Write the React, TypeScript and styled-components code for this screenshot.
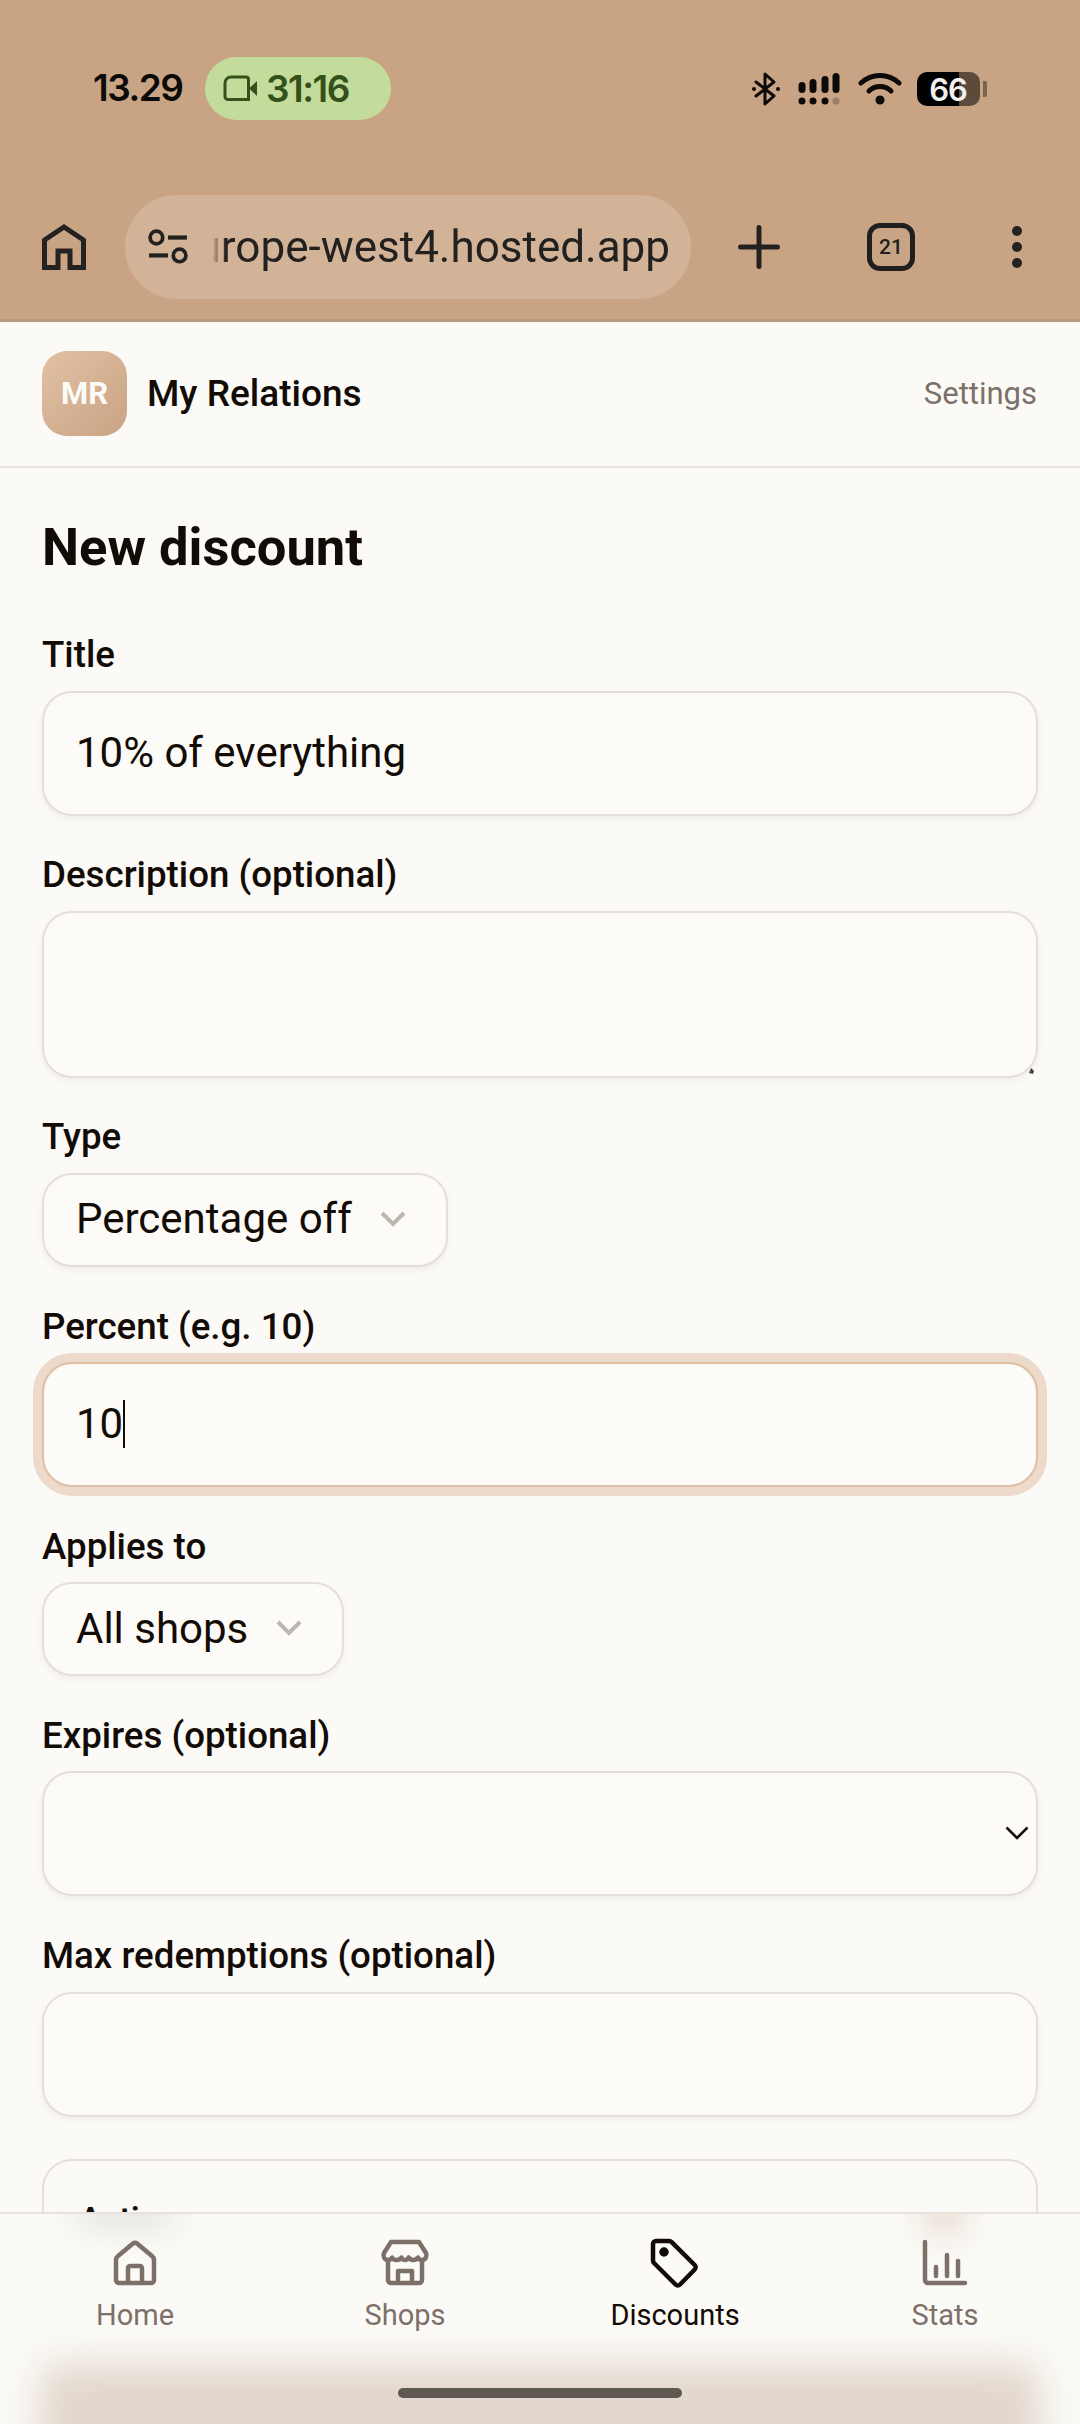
import { createGlobalStyle, styled } from "styled-components"

const GlobalStyle = createGlobalStyle`
	* {
		box-sizing: border-box;
	}

	html,
	body {
		margin: 0;
		background: #fbfaf6;
	}

	body {
		font-family: Roboto, "Liberation Sans", sans-serif;
		color: #120b06;
	}
`

const Screen = styled.div`
	position: relative;
	width: 1080px;
	height: 2424px;
	overflow: hidden;
	display: flex;
	flex-direction: column;
	background: #fbfaf6;
`

const Chrome = styled.div`
	height: 322px;
	flex: none;
	background: #c8a484;
	border-bottom: 3px solid #b99a7e;
`

const StatusBar = styled.div`
	height: 195px;
	padding: 57px 0 0 93px;
	display: flex;
	align-items: flex-start;
`

const Clock = styled.span`
	width: 112px;
	height: 63px;
	line-height: 62px;
	font-family: Inter, Roboto, sans-serif;
	font-size: 37px;
	font-weight: 600;
	letter-spacing: -1.5px;
	color: #0c0a08;
`

const CallPill = styled.div`
	width: 186px;
	height: 63px;
	border-radius: 32px;
	background: #c3dc9b;
	padding-left: 18px;
	display: flex;
	align-items: center;
	gap: 9px;
	font-family: Inter, Roboto, sans-serif;
	font-size: 37px;
	font-weight: 600;
	letter-spacing: -1.5px;
	color: #35501a;
`

const StatusIcons = styled.div`
	margin-left: 361px;
	height: 63px;
	display: flex;
	align-items: center;
`

const SignalIcon = styled.svg`
	margin-left: 17px;
`

const WifiIcon = styled.svg`
	margin-left: 17px;
`

const BatteryBody = styled.div`
	width: 63px;
	height: 34px;
	margin-left: 15px;
	border-radius: 10px;
	background: linear-gradient(90deg, #000 42px, #5c4a3c 42px);
	text-align: center;
	padding-right: 1px;
	line-height: 35px;
	font-family: Inter, Roboto, sans-serif;
	font-size: 31px;
	font-weight: 600;
	letter-spacing: -1px;
	color: #f2f0ee;
`

const BatteryTip = styled.div`
	width: 4px;
	height: 16px;
	margin-left: 3px;
	border-radius: 0 2px 2px 0;
	background: #7b6450;
`

const Toolbar = styled.div`
	height: 104px;
	padding-left: 42px;
	display: grid;
	grid-template-columns: 83px 566px 136px 128px 124px;
	align-items: center;
	justify-items: center;

	& > svg:first-child {
		justify-self: start;
	}
`

const UrlBar = styled.div`
	width: 566px;
	height: 104px;
	border-radius: 52px;
	background: #d3b398;
	padding: 0 21px 0 23px;
	display: flex;
	align-items: center;
	gap: 24px;
`

const UrlClip = styled.div`
	flex: 1;
	min-width: 0;
	overflow: hidden;
	display: flex;
	justify-content: flex-end;
	white-space: nowrap;
	font-size: 44px;
	color: #23211f;
	mask-image: linear-gradient(90deg, transparent 0, #000 14px);
`

const TabCount = styled.div`
	width: 48px;
	height: 48px;
	border: 5px solid #1f1f1f;
	border-radius: 13px;
	display: flex;
	align-items: center;
	justify-content: center;
	font-size: 21px;
	font-weight: 500;
	color: #1f1f1f;
`

const Header = styled.header`
	height: 146px;
	flex: none;
	padding: 0 43px 2px 42px;
	border-bottom: 2px solid #e8e2dc;
	display: flex;
	align-items: center;
	gap: 20px;
`

const Avatar = styled.div`
	width: 85px;
	height: 85px;
	border-radius: 25px;
	background: linear-gradient(135deg, #e2c0a4, #c8a484);
	display: flex;
	align-items: center;
	justify-content: center;
	font-size: 31px;
	font-weight: 700;
	color: #fdfbf8;
`

const Brand = styled.span`
	flex: 1;
	font-size: 37px;
	font-weight: 500;
`

const SettingsLink = styled.span`
	font-size: 31px;
	color: #7d7068;
`

const Main = styled.main`
	padding: 46px 42px 0;
	display: flex;
	flex-direction: column;
`

const Heading = styled.h1`
	margin: 0 0 52px;
	font-size: 52.5px;
	line-height: 66px;
	font-weight: 700;
`

const Field = styled.div`
	display: flex;
	flex-direction: column;
	align-items: flex-start;
	margin-bottom: 36.7px;
`

const Label = styled.div`
	height: 46px;
	margin-bottom: 12.5px;
	line-height: 46px;
	font-size: 36.7px;
	font-weight: 500;
`

const Control = styled.div<{ $height: number; $focused?: boolean }>`
	position: relative;
	width: 100%;
	height: ${(p) => p.$height}px;
	padding: 0 32px 2px;
	border: 2px solid ${(p) => (p.$focused ? "#dfbfa3" : "#e6dfd9")};
	border-radius: 30px;
	background: #fcfbf8;
	box-shadow: ${(p) =>
		p.$focused ? "0 0 0 9px #eddacb" : "0 3px 6px rgba(70, 45, 25, 0.06)"};
	display: flex;
	align-items: center;
	font-size: 42px;
`

const SelectBox = styled.div`
	height: 94px;
	padding: 0 40px 2px 32px;
	border: 2px solid #e6dfd9;
	border-radius: 30px;
	background: #fcfbf8;
	box-shadow: 0 3px 6px rgba(70, 45, 25, 0.06);
	display: inline-flex;
	align-items: center;
	gap: 28px;
	font-size: 42px;
`

const Caret = styled.span`
	width: 2px;
	height: 48px;
	background: #120b06;
`

const ResizeGrip = styled.svg`
	position: absolute;
	right: 0;
	bottom: 1px;
`

const DateChevron = styled.svg`
	position: absolute;
	right: 7px;
	top: 53px;
`

const SwitchCard = styled.div`
	height: 170px;
	flex: none;
	margin-top: 6px;
	padding: 35px 35px 0;
	border: 2px solid #e6dfd9;
	border-radius: 30px;
	font-size: 34px;
	font-weight: 600;
	line-height: 46px;
`

const BottomNav = styled.nav`
	position: absolute;
	left: 0;
	right: 0;
	bottom: 0;
	height: 212px;
	padding-top: 24px;
	overflow: hidden;
	border-top: 2px solid #e8e2dc;
	background: #fbfaf6;
	display: grid;
	grid-template-columns: repeat(4, 1fr);
	align-items: start;
`

// what the page behind the frosted nav leaves showing through it
const FrostGlow = styled.div<{
	$left: number
	$top: number
	$width: number
	$height: number
	$color: string
	$blur: number
}>`
	position: absolute;
	left: ${(p) => p.$left}px;
	top: ${(p) => p.$top}px;
	width: ${(p) => p.$width}px;
	height: ${(p) => p.$height}px;
	border-radius: 20px;
	background: ${(p) => p.$color};
	filter: blur(${(p) => p.$blur}px);
`

const NavItem = styled.div<{ $active?: boolean }>`
	position: relative;
	display: flex;
	flex-direction: column;
	align-items: center;
	gap: 7px;
	font-size: 29px;
	line-height: 36px;
	color: ${(p) => (p.$active ? "#120b06" : "#7d7068")};

	& svg {
		display: block;
	}
`

const HomeBar = styled.div`
	position: absolute;
	left: 398px;
	bottom: 26px;
	width: 284px;
	height: 10px;
	border-radius: 5px;
	background: #5d5951;
`

function NavIcon({ children }: { children: React.ReactNode }) {
	return (
		<svg
			width="52"
			height="52"
			viewBox="0 0 52 52"
			fill="none"
			stroke="currentColor"
			strokeWidth="4.5"
			strokeLinecap="round"
			strokeLinejoin="round"
		>
			{children}
		</svg>
	)
}

function SelectChevron() {
	return (
		<svg width="26" height="16" viewBox="0 0 26 16" fill="none">
			<path d="M2 2 13 13 24 2" stroke="#bdb5ae" strokeWidth="4" />
		</svg>
	)
}

export default function App() {
	return (
		<Screen>
			<GlobalStyle />
			<Chrome>
				<StatusBar>
					<Clock>13.29</Clock>
					<CallPill>
						<svg width="34" height="27" viewBox="0 0 34 27" fill="none">
							<path
								d="M8 2h15a2.500 2.500 0 0 1 2.500 2.500v20H5a3 3 0 0 1-3-3V8a6 6 0 0 1 6-6Z"
								stroke="#35501a"
								strokeWidth="3"
							/>
							<path d="M26 13.500 34 6v15Z" fill="#35501a" />
						</svg>
						31:16
					</CallPill>
					<StatusIcons>
						<svg width="28" height="34" viewBox="0 0 28 34" fill="none">
							<path
								d="M4 10 22 24 13 32V2l9 8L4 24"
								stroke="#0c0a08"
								strokeWidth="3"
								strokeLinejoin="round"
								strokeLinecap="round"
							/>
							<circle cx="2" cy="17" r="2" fill="#0c0a08" />
							<circle cx="26" cy="17" r="2" fill="#0c0a08" />
						</svg>
						<SignalIcon width="44" height="34" viewBox="0 0 41 34">
							<g fill="#0c0a08">
								<rect x="0" y="10" width="7" height="11" rx="3.5" />
								<rect x="11" y="7" width="7" height="14" rx="3.5" />
								<rect x="23" y="4" width="7" height="17" rx="3.5" />
								<rect x="34" y="1" width="7" height="20" rx="3.5" />
								<circle cx="3.5" cy="29" r="3.5" />
								<circle cx="14.5" cy="29" r="3.5" />
								<circle cx="26.5" cy="29" r="3.5" />
							</g>
							<circle cx="37.5" cy="29" r="3.5" fill="#9a7f68" />
						</SignalIcon>
						<WifiIcon width="44" height="34" viewBox="0 0 44 34" fill="none">
							<path
								d="M3 11C14 1 30 1 41 11"
								stroke="#0c0a08"
								strokeWidth="5"
								strokeLinecap="round"
							/>
							<path
								d="M11 19C17 13 27 13 33 19"
								stroke="#0c0a08"
								strokeWidth="5"
								strokeLinecap="round"
							/>
							<circle cx="22" cy="28" r="4.5" fill="#0c0a08" />
						</WifiIcon>
						<BatteryBody>66</BatteryBody>
						<BatteryTip />
					</StatusIcons>
				</StatusBar>
				<Toolbar>
					<svg width="44" height="46" viewBox="0 0 44 46" fill="none">
						<path
							d="M2.500 43.500V16L22 3l19.500 13v27.500H28V27H16v16.500Z"
							stroke="#242220"
							strokeWidth="5"
						/>
					</svg>
					<UrlBar>
						<svg width="40" height="36" viewBox="0 0 38 34" fill="none">
							<circle cx="8" cy="8" r="6" stroke="#23211f" strokeWidth="3.500" />
							<path d="M19 8h18" stroke="#23211f" strokeWidth="4" />
							<circle cx="30" cy="25" r="6" stroke="#23211f" strokeWidth="3.500" />
							<path d="M1 25h18" stroke="#23211f" strokeWidth="4" />
						</svg>
						<UrlClip>
							<span>europe-west4.hosted.app</span>
						</UrlClip>
					</UrlBar>
					<svg width="42" height="44" viewBox="0 0 42 44" fill="none">
						<path
							d="M21 2.500v39M2.500 22h37"
							stroke="#242220"
							strokeWidth="5"
							strokeLinecap="round"
						/>
					</svg>
					<TabCount>21</TabCount>
					<svg width="14" height="44" viewBox="0 0 14 44">
						<g fill="#242220">
							<circle cx="7" cy="6" r="5" />
							<circle cx="7" cy="22" r="5" />
							<circle cx="7" cy="38" r="5" />
						</g>
					</svg>
				</Toolbar>
			</Chrome>

			<Header>
				<Avatar>MR</Avatar>
				<Brand>My Relations</Brand>
				<SettingsLink>Settings</SettingsLink>
			</Header>

			<Main>
				<Heading>New discount</Heading>

				<Field>
					<Label>Title</Label>
					<Control $height={125}>10% of everything</Control>
				</Field>

				<Field>
					<Label>Description (optional)</Label>
					<Control $height={167}>
						<ResizeGrip width="10" height="10" viewBox="0 0 10 10">
							<path d="M3 8 5 3 8 6 7 9Z" fill="#4a4540" />
						</ResizeGrip>
					</Control>
				</Field>

				<Field>
					<Label>Type</Label>
					<SelectBox>
						Percentage off
						<SelectChevron />
					</SelectBox>
				</Field>

				<Field>
					<Label>Percent (e.g. 10)</Label>
					<Control $height={125} $focused>
						10
						<Caret />
					</Control>
				</Field>

				<Field>
					<Label>Applies to</Label>
					<SelectBox>
						All shops
						<SelectChevron />
					</SelectBox>
				</Field>

				<Field>
					<Label>Expires (optional)</Label>
					<Control $height={125}>
						<DateChevron width="24" height="14" viewBox="0 0 24 14" fill="none">
							<path d="M1.500 1.500 12 12 22.500 1.500" stroke="#120b06" strokeWidth="2.500" />
						</DateChevron>
					</Control>
				</Field>

				<Field>
					<Label>Max redemptions (optional)</Label>
					<Control $height={125} />
				</Field>

				<SwitchCard>Active</SwitchCard>
			</Main>

			<BottomNav>
				<FrostGlow $left={76} $top={-16} $width={100} $height={30} $color="#e4e3de" $blur={16} />
				<FrostGlow $left={922} $top={-16} $width={44} $height={36} $color="#e6d8cc" $blur={16} />
				<FrostGlow $left={40} $top={150} $width={1000} $height={120} $color="#e2d7cc" $blur={18} />
				<NavItem>
					<NavIcon>
						<path d="M7 22c0-1.500.700-3 2-4L24 5.500c1-.900 3-.900 4 0L43 18c1.300 1 2 2.500 2 4v20a3 3 0 0 1-3 3H10a3 3 0 0 1-3-3Z" />
						<path d="M19 45V30a2 2 0 0 1 2-2h10a2 2 0 0 1 2 2v15" />
					</NavIcon>
					Home
				</NavItem>
				<NavItem>
					<NavIcon>
						<path d="M12 4h28l7 11c1.500 3-.500 7-4 7-3 0-4-2.500-4-2.500s-1.500 2.500-4.500 2.500S29.500 19.500 29.500 19.500 28.500 22 26 22s-3.500-2.500-3.500-2.500S21 22 17.500 22 13 19.500 13 19.500 12 22 9 22c-3.500 0-5.500-4-4-7Z" />
						<path d="M9 23v19a3 3 0 0 0 3 3h28a3 3 0 0 0 3-3V23" />
						<path d="M19 45V33h14v12" />
					</NavIcon>
					Shops
				</NavItem>
				<NavItem $active>
					<NavIcon>
						<path d="M4 6a3 3 0 0 1 3-3h13c1 0 2 .400 2.700 1.100l23 22.900c1.300 1.300 1.300 3.200 0 4.500L31 46.500c-1.300 1.300-3.200 1.300-4.500 0L5 25c-.700-.700-1-1.500-1-2.500Z" />
						<circle cx="15" cy="14" r="2.500" fill="currentColor" />
					</NavIcon>
					Discounts
				</NavItem>
				<NavItem>
					<NavIcon>
						<path d="M6 4v38a3 3 0 0 0 3 3h37" />
						<path d="M17 29v9M28 17v21M39 23v15" />
					</NavIcon>
					Stats
				</NavItem>
				<HomeBar />
			</BottomNav>
		</Screen>
	)
}
